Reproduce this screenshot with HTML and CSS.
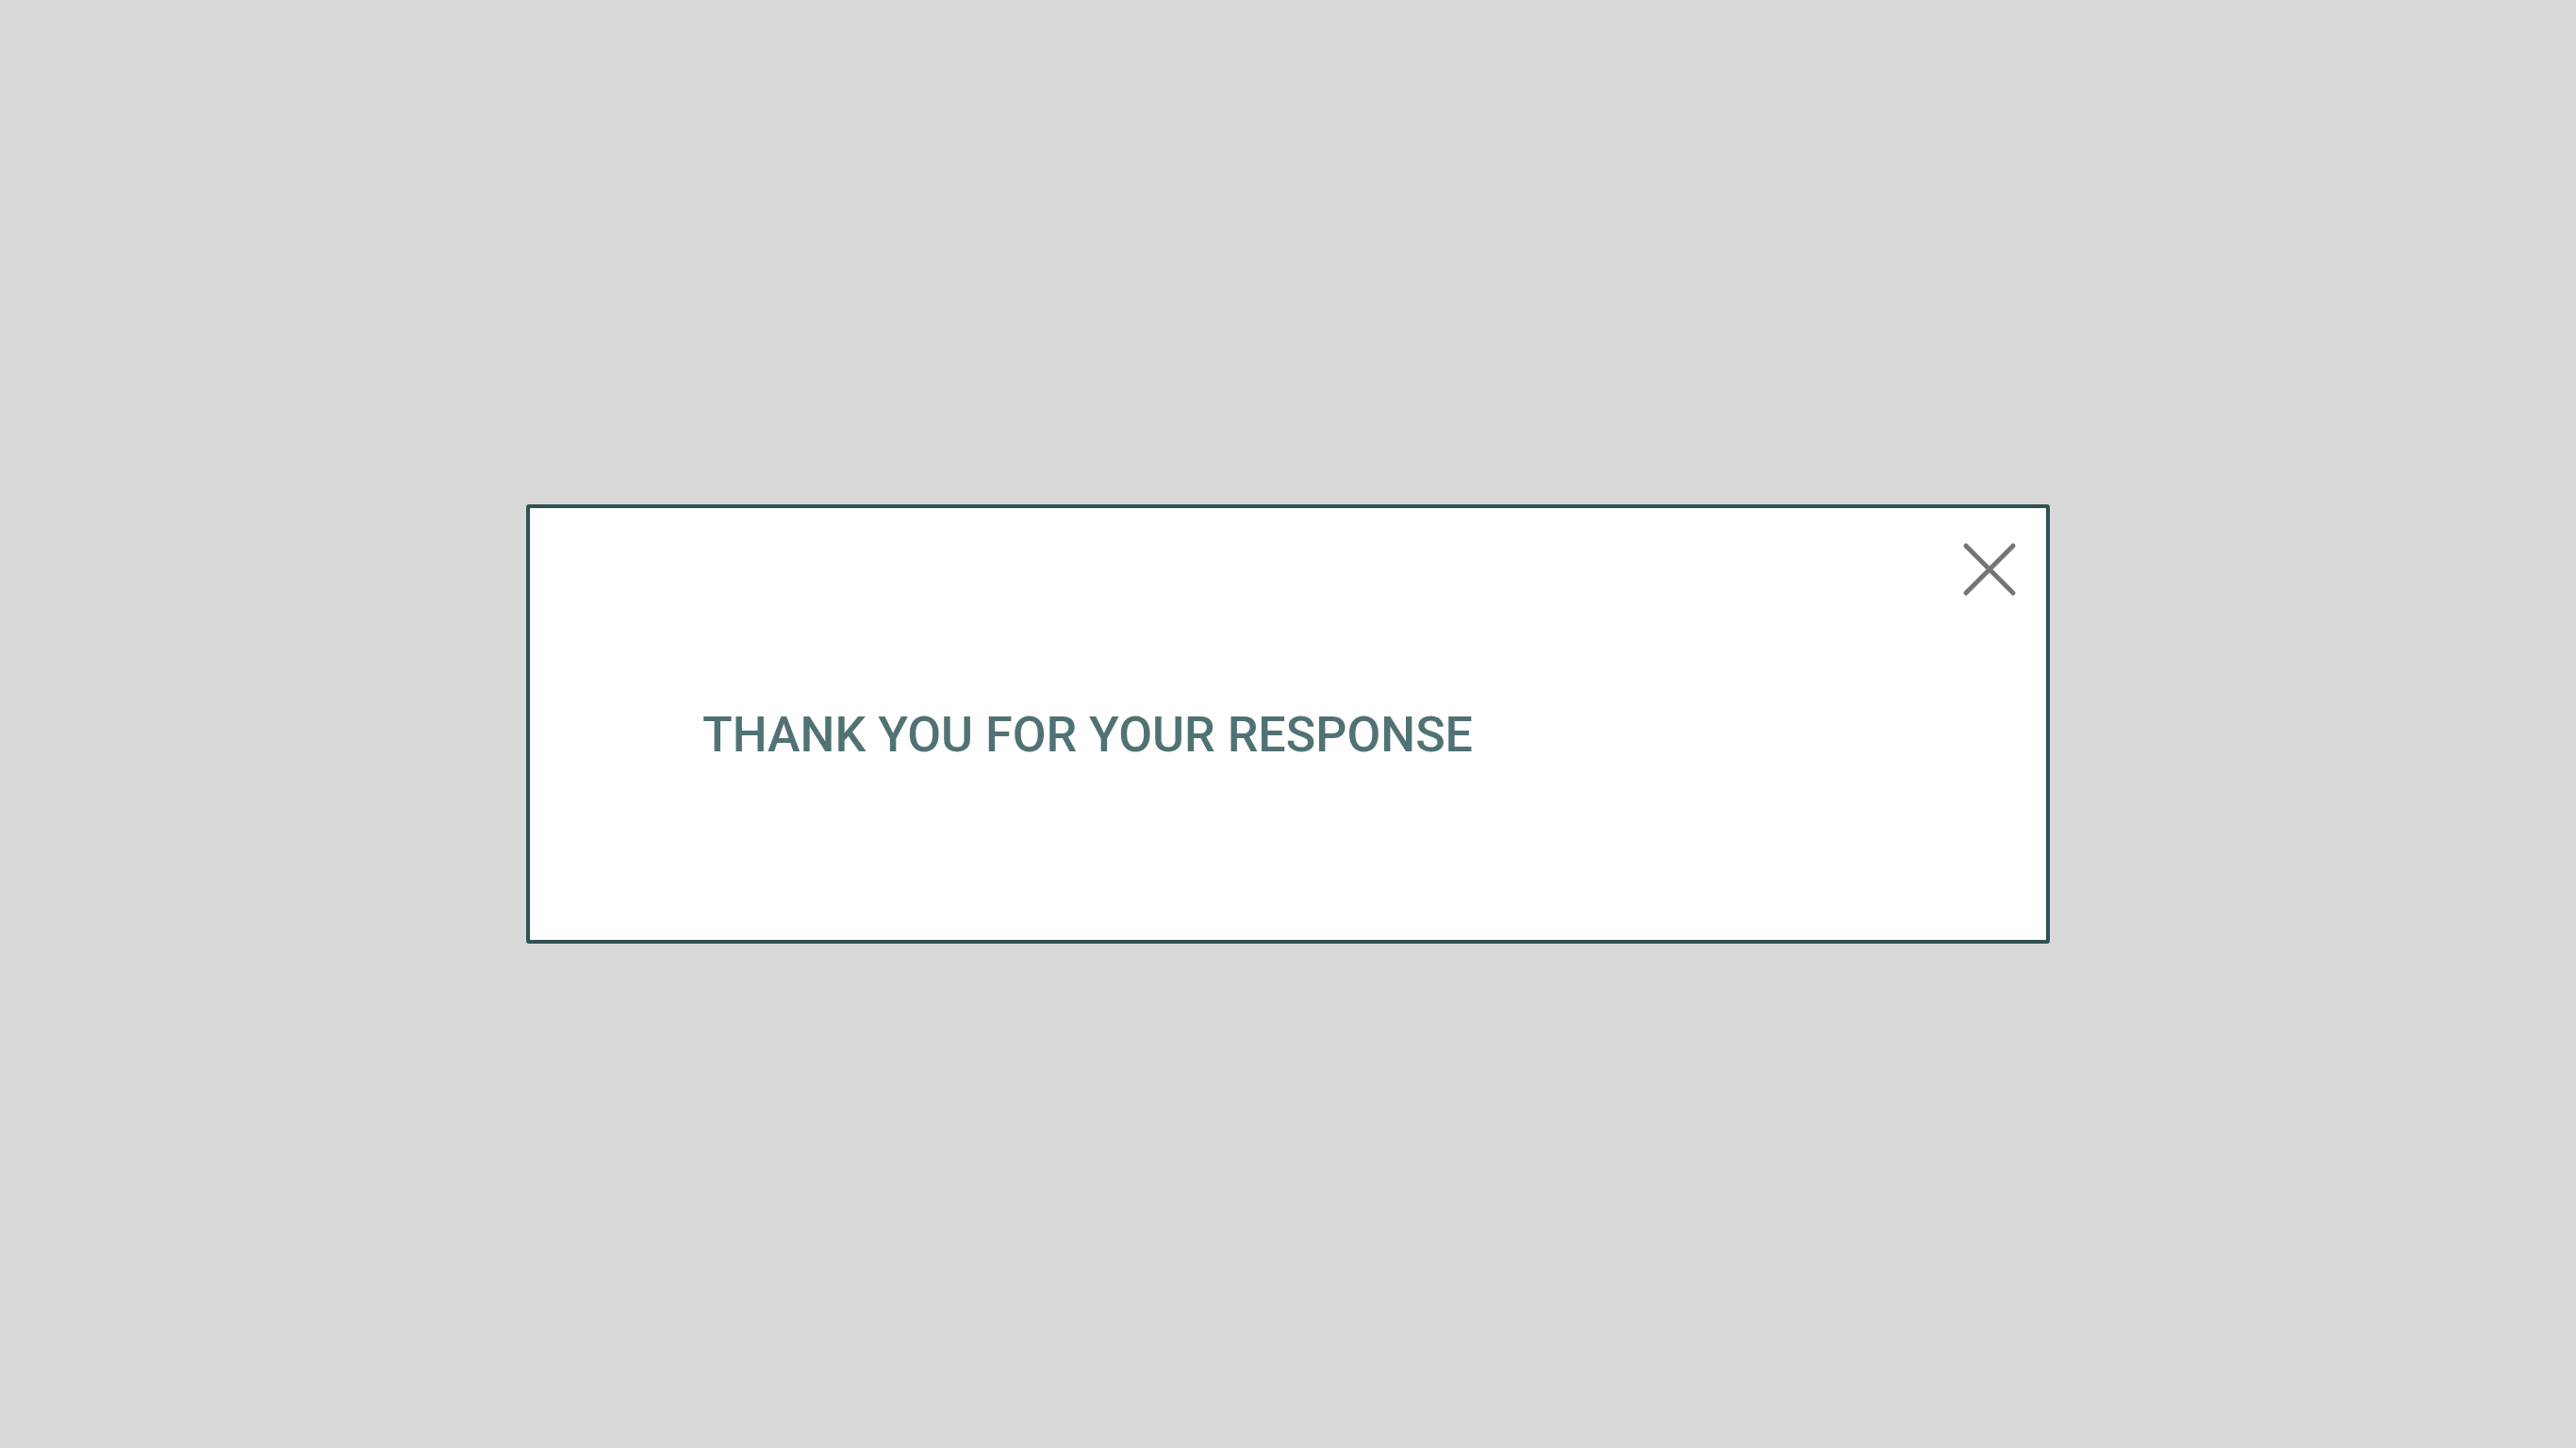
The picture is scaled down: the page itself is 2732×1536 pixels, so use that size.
FILE: index.html
```html
<!DOCTYPE html>
<html>
<head>
<meta charset="utf-8">
<link rel="stylesheet" href="styles.css">
</head>
<body>
<div class="modal">
  <button class="close" aria-label="Close">
    <svg width="60" height="60" viewBox="0 0 60 60"><path d="M6 6 L56 56 M56 6 L6 56" stroke="#757575" stroke-width="5" stroke-linecap="round" fill="none"/></svg>
  </button>
  <h1 class="message">THANK YOU FOR YOUR RESPONSE</h1>
</div>
</body>
</html>
```
FILE: styles.css
```css
html, body {
  margin: 0;
  padding: 0;
}
body {
  background: #d9d9d9;
  height: 100vh;
  display: flex;
  align-items: center;
  justify-content: center;
  font-family: Roboto, "Liberation Sans", sans-serif;
}
.modal {
  position: relative;
  box-sizing: border-box;
  width: 1616px;
  height: 466px;
  background: #ffffff;
  border: 4px solid #2f5352;
  border-radius: 3px;
  display: flex;
  align-items: center;
  padding: 24px 0 0 183px;
}
.message {
  margin: 0;
  font-size: 52px;
  font-weight: 500;
  color: #517274;
  letter-spacing: 0;
  line-height: 1;
}
.close {
  position: absolute;
  top: 34px;
  right: 31px;
  width: 60px;
  height: 60px;
  padding: 0;
  border: 0;
  background: transparent;
  cursor: pointer;
}
.close svg {
  display: block;
}
```
